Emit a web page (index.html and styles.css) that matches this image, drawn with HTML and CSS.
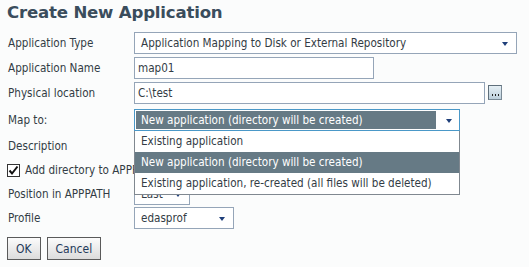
FILE: index.html
```html
<!DOCTYPE html>
<html>
<head>
<meta charset="utf-8">
<link rel="stylesheet" href="styles.css">
</head>
<body>
<div class="page">
  <h1 class="title">Create New Application</h1>
  <div class="form">
    <div class="row">
      <label class="lbl">Application Type</label>
      <div class="select sel-type"><span class="val">Application Mapping to Disk or External Repository</span><span class="arrow"></span></div>
    </div>
    <div class="row">
      <label class="lbl">Application Name</label>
      <div class="input in-name">map01</div>
    </div>
    <div class="row">
      <label class="lbl">Physical location</label>
      <div class="input in-loc">C:\test</div>
      <div class="browse"><span class="dot"></span><span class="dot"></span><span class="dot"></span></div>
    </div>
    <div class="row row-map">
      <label class="lbl">Map to:</label>
      <div class="mapwrap">
        <div class="select sel-map"><span class="val hl">New application (directory will be created)</span><span class="arrow"></span></div>
        <ul class="dropdown">
          <li>Existing application</li>
          <li class="on">New application (directory will be created)</li>
          <li>Existing application, re-created (all files will be deleted)</li>
        </ul>
      </div>
    </div>
    <div class="row row-s">
      <label class="lbl">Description</label>
    </div>
    <div class="row row-s">
      <span class="check"><svg width="13" height="13" viewBox="0 0 13 13"><rect x="0.5" y="0.5" width="12" height="12" fill="#fff" stroke="#333"/><path d="M2.5 6.5 L5 9.5 L10.5 2.5" fill="none" stroke="#111" stroke-width="2"/></svg></span>
      <span class="checklbl">Add directory to APPPATH</span>
    </div>
    <div class="row row-s">
      <label class="lbl">Position in APPPATH</label>
      <div class="select sel-pos"><span class="val">Last</span><span class="arrow"></span></div>
    </div>
    <div class="row row-s">
      <label class="lbl">Profile</label>
      <div class="select sel-prof"><span class="val">edasprof</span><span class="arrow"></span></div>
    </div>
  </div>
  <div class="buttons">
    <button class="btn">OK</button>
    <button class="btn">Cancel</button>
  </div>
</div>
</body>
</html>
```
FILE: styles.css
```css
html, body {
  margin: 0;
  padding: 0;
  background: #fbfcfc;
}
body {
  font-family: "DejaVu Sans Condensed", "DejaVu Sans", sans-serif;
  font-size: 11.6px;
  color: #333c45;
  width: 529px;
  height: 267px;
  overflow: hidden;
}
.page {
  padding: 2px 0 0 7px;
}
.title {
  margin: 0 0 7px 0;
  font-family: "DejaVu Sans", sans-serif;
  font-size: 16.6px;
  font-weight: bold;
  color: #3a4d5c;
  letter-spacing: -0.2px;
  height: 21px;
  line-height: 21px;
}
.form {
  display: flex;
  flex-direction: column;
}
.row {
  display: flex;
  align-items: center;
  height: 25px;
  position: relative;
}
.row-s {
  height: 24px;
}
.lbl {
  width: 126px;
  padding-left: 1px;
  flex: none;
}
.select, .input {
  box-sizing: border-box;
  height: 22px;
  border: 1px solid #95a5b8;
  background: #fff;
  display: flex;
  align-items: center;
  position: relative;
}
.select .val {
  padding-left: 6px;
  flex: 1;
  white-space: nowrap;
  overflow: hidden;
}
.select .arrow {
  width: 0;
  height: 0;
  border-left: 3.5px solid transparent;
  border-right: 3.5px solid transparent;
  border-top: 4px solid #1f3f7a;
  margin: 0 8px 0 6px;
  position: relative;
  top: 1px;
}
.input {
  padding-left: 3px;
}
.sel-type { width: 383px; }
.in-name { width: 240px; }
.in-loc { width: 351px; }
.browse {
  margin-left: 3px;
  width: 14px;
  height: 15px;
  box-sizing: border-box;
  border: 1px solid #7a8a96;
  border-top-color: #5f6f7b;
  border-left-color: #5f6f7b;
  background: linear-gradient(#e6f0f5, #bccfdb);
  display: flex;
  justify-content: center;
  align-items: flex-end;
  gap: 2px;
  padding-bottom: 3px;
}
.browse .dot {
  width: 1px;
  height: 2px;
  background: #222;
}
.row-map {
  height: 29px;
  z-index: 5;
}
.mapwrap {
  position: relative;
  width: 326px;
  height: 22px;
}
.sel-map {
  width: 326px;
  border-color: #4a98c8;
}
.sel-map .val.hl {
  background: #667a85;
  color: #fff;
  margin: 1px 0 1px 1px;
  padding-left: 5px;
  height: 18px;
  line-height: 18px;
}
.sel-map .arrow {
  margin: 0 7px 0 10px;
}
.dropdown {
  position: absolute;
  left: 0;
  top: 22px;
  width: 326px;
  box-sizing: border-box;
  margin: 0;
  padding: 0;
  list-style: none;
  background: #fff;
  border: 1px solid #808890;
  border-top: none;
}
.dropdown li {
  height: 21px;
  line-height: 21px;
  padding-left: 6px;
  white-space: nowrap;
}
.dropdown li.on {
  background: #667a85;
  color: #fff;
}
.check {
  width: 13px;
  height: 13px;
  margin-right: 5px;
  display: flex;
}
.sel-pos { width: 56px; height: 21px; }
.sel-prof { width: 100px; }
.buttons {
  display: flex;
  gap: 6px;
  margin-top: 7px;
}
.btn {
  box-sizing: border-box;
  height: 23px;
  padding: 0 8px;
  font-family: "DejaVu Sans Condensed", "DejaVu Sans", sans-serif;
  font-size: 12px;
  color: #1f3a5a;
  border: 1px solid #5a5a5a;
  background: linear-gradient(#fbfbfb, #dcdcdc);
  border-radius: 0;
}
```
